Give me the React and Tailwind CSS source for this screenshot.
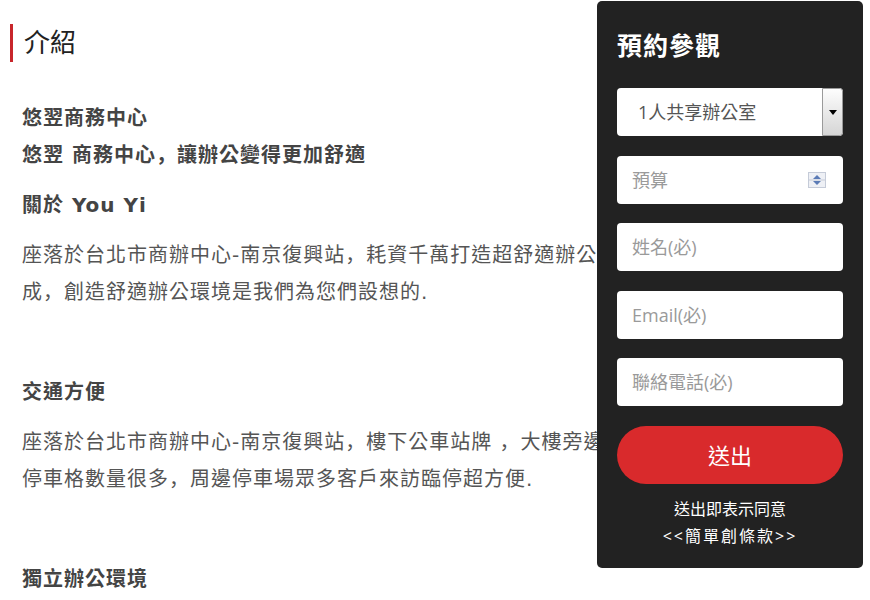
import React from "react";

const font = { fontFamily: '"DejaVu Sans", "Noto Sans CJK TC", sans-serif' };
const formFont = { fontFamily: '"Open Sans", "Noto Sans CJK TC", sans-serif' };

// left-bottom comma like the original page's font
const C = () => (
  <span
    className="inline-block leading-none"
    style={{ fontFamily: '"Noto Sans CJK JP", sans-serif' }}
  >
    ，
  </span>
);

const Field = ({ placeholder, spinner }) => (
  <div className="relative h-[48px] w-full rounded-[4px] bg-white">
    <input
      placeholder={placeholder}
      className="h-full w-full rounded-[4px] bg-transparent pl-[15px] text-[18px] text-[#555] outline-none placeholder:text-[#9a9a9a]"
    />
    {spinner && (
      <svg
        className="absolute right-[17px] top-[16px]"
        width="18"
        height="16"
        viewBox="0 0 18 16"
      >
        <rect x="0.5" y="0.5" width="17" height="15" fill="#eef0f5" stroke="#c5cbd8" />
        <line x1="1" y1="8" x2="17" y2="8" stroke="#c5cbd8" />
        <path d="M9 3 L13 7 H5 Z" fill="#5b7bb6" />
        <path d="M9 13 L13 9 H5 Z" fill="#5b7bb6" />
      </svg>
    )}
  </div>
);

const Block = ({ children, bold }) => (
  <div
    className={`mb-[13px] whitespace-nowrap text-[20px] leading-[37px] tracking-[1px] ${
      bold ? "font-bold text-[#444]" : "text-[#555]"
    }`}
  >
    {children}
  </div>
);

export default function App() {
  return (
    <div className="relative h-[600px] w-[870px] overflow-hidden bg-white" style={font}>
      <div className="w-[860px] pl-[22px]">
        <div className="-ml-[12px] mt-[24px] flex h-[38px] items-center border-l-[3px] border-[#c8262b] pl-[11px]">
          <span className="text-[26px] text-[#222]">介紹</span>
        </div>

        <div className="mt-[38px]">
          <Block bold>
            悠翌商務中心
            <br />
            悠翌 商務中心<C />讓辦公變得更加舒適
          </Block>
          <Block bold>關於 You Yi</Block>
          <Block>
            座落於台北市商辦中心-南京復興站<C />耗資千萬打造超舒適辦公空間<C />全新
            <br />
            成<C />創造舒適辦公環境是我們為您們設想的.
          </Block>
          <Block>&nbsp;</Block>
          <Block bold>交通方便</Block>
          <Block>
            座落於台北市商辦中心-南京復興站<C />樓下公車站牌 <C />大樓旁邊
            <br />
            停車格數量很多<C />周邊停車場眾多客戶來訪臨停超方便.
          </Block>
          <Block>&nbsp;</Block>
          <Block bold>獨立辦公環境</Block>
        </div>
      </div>

      <aside
        className="absolute left-[597px] top-[1px] h-[567px] w-[266px] rounded-[5px] bg-[#222222] px-[20px]"
        style={formFont}
      >
        <h3 className="mt-[27px] text-[25px] font-bold leading-[34px] tracking-[1px] text-white">
          預約參觀
        </h3>

        <div className="mt-[26px] flex flex-col gap-[19.5px]">
          <div className="flex h-[48px] w-full overflow-hidden rounded-[4px] bg-white">
            <div className="flex flex-1 items-center pl-[21px] text-[18px] text-[#555]">
              1人共享辦公室
            </div>
            <div className="flex w-[21px] items-center justify-center rounded-r-[3px] border border-[#9a9a9a] bg-gradient-to-b from-[#fdfdfd] to-[#d6d6d6]">
              <svg width="8" height="5" viewBox="0 0 8 5">
                <path d="M0 0 H8 L4 5 Z" fill="#000" />
              </svg>
            </div>
          </div>
          <Field placeholder="預算" spinner />
          <Field placeholder="姓名(必)" />
          <Field placeholder="Email(必)" />
          <Field placeholder="聯絡電話(必)" />
        </div>

        <button className="mt-[20px] flex h-[58px] w-full items-center justify-center rounded-full bg-[#d92a2c] text-[22px] text-white">
          送出
        </button>

        <div className="mt-[12px] text-center text-[16px] leading-[27px] text-white">
          <div>送出即表示同意</div>
          <div className="tracking-[2px]">&lt;&lt;簡單創條款&gt;&gt;</div>
        </div>
      </aside>
    </div>
  );
}
